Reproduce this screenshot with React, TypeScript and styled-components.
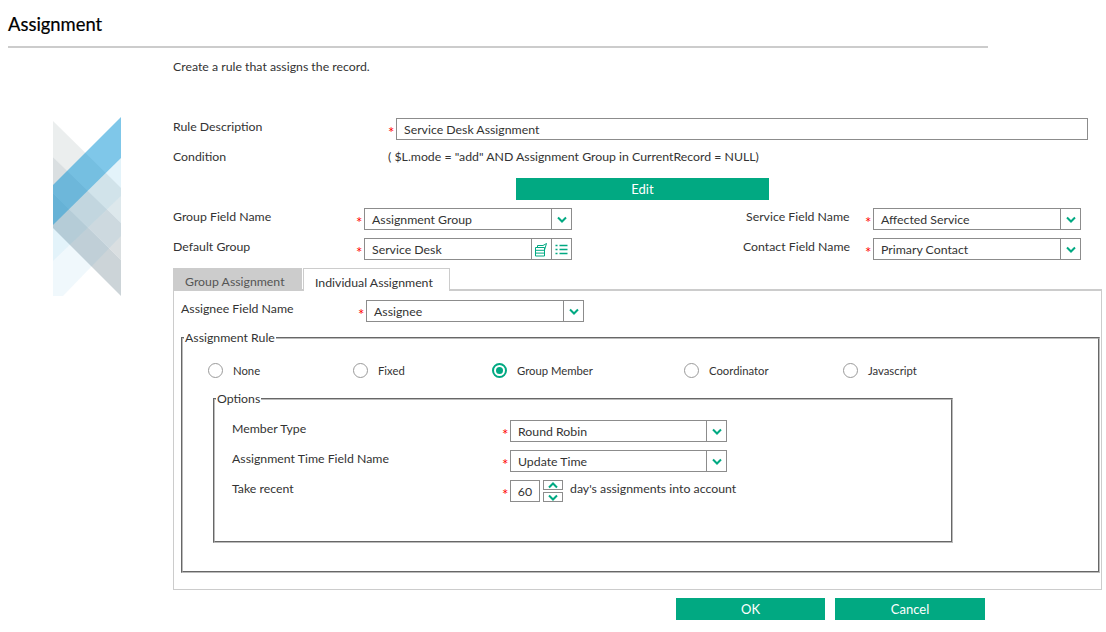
import React from 'react';
import styled, { createGlobalStyle } from 'styled-components';

const GlobalStyle = createGlobalStyle`
  html, body {
    margin: 0;
    padding: 0;
    background: #fff;
  }
  body {
    font-family: 'Lato', 'Open Sans', sans-serif;
    font-size: 12.3px;
    color: #333;
  }
  * {
    box-sizing: border-box;
  }
`;

const Page = styled.div`
  width: 1106px;
  height: 632px;
  overflow: hidden;
`;

const Title = styled.h1`
  margin: 0 118px 0 8px;
  height: 48px;
  padding-top: 12px;
  font-size: 18.4px;
  line-height: 24px;
  font-weight: 400;
  color: #000;
  -webkit-text-stroke: 0.2px #000;
  border-bottom: 2px solid #ccc;
`;

const Intro = styled.p`
  margin: 12px 0 0 173px;
  height: 56px;
  line-height: 14px;
`;

const Main = styled.div`
  display: grid;
  grid-template-columns: 173px 929px;
`;

const LogoCell = styled.div`
  padding-left: 53px;
`;

const Form = styled.div`
  padding-top: 2px;
`;

const Row = styled.div<{ $mt?: number }>`
  display: flex;
  margin-top: ${p => p.$mt ?? 0}px;
  height: 22px;
`;

const Label = styled.div<{ $w: number }>`
  width: ${p => p.$w}px;
  flex-shrink: 0;
  line-height: 18px;
`;

const ConditionLabel = styled(Label)`
  line-height: 22px;
`;

const Star = styled.span`
  width: 8px;
  height: 22px;
  flex-shrink: 0;
  color: #f00;
  font-weight: 400;
  font-size: 15px;
  line-height: 28px;
`;

const Box = styled.div<{ $w?: number }>`
  display: flex;
  height: 22px;
  width: ${p => (p.$w ? `${p.$w}px` : 'auto')};
  flex: ${p => (p.$w ? '0 0 auto' : '1')};
  border: 1px solid #8c8c8c;
  background: #fff;
`;

const DescriptionBox = styled(Box)`
  margin-right: 14px;
`;

const BoxText = styled.div`
  flex: 1;
  padding-left: 7px;
  line-height: 21px;
  white-space: nowrap;
`;

const BoxButton = styled.div`
  width: 20px;
  flex-shrink: 0;
  display: flex;
  align-items: center;
  justify-content: center;
  border-left: 1px solid #8c8c8c;
`;

const ConditionText = styled.div`
  line-height: 22px;
`;

const GreenButton = styled.button<{ $w: number }>`
  width: ${p => p.$w}px;
  height: 22px;
  padding: 0;
  border: none;
  background: #01a982;
  color: #fff;
  font-family: inherit;
  font-size: 13px;
`;

const EditRow = styled.div`
  height: 22px;
  margin: 10px 0 8px 343px;
`;

const Spacer = styled.div<{ $w: number }>`
  width: ${p => p.$w}px;
  flex-shrink: 0;
`;

const Tabs = styled.div`
  display: flex;
  gap: 1px;
  margin-top: 8px;
  height: 21px;
  position: relative;
  z-index: 1;
`;

const Tab = styled.div<{ $active?: boolean; $w: number }>`
  width: ${p => p.$w}px;
  height: ${p => (p.$active ? 23 : 21)}px;
  padding-left: ${p => (p.$active ? 11 : 12)}px;
  line-height: 27px;
  color: ${p => (p.$active ? '#333' : '#555')};
  background: ${p => (p.$active ? '#fff' : '#ccc')};
  border: ${p => (p.$active ? '1px solid #ccc' : 'none')};
  border-bottom: none;
`;

const Panel = styled.div`
  height: 301px;
  padding: 9px 1px 0 7px;
  border: 1px solid #ccc;
  border-top-width: 2px;
`;

const Group = styled.fieldset<{ $h: number; $w?: number; $ml: number; $mt: number }>`
  height: ${p => p.$h}px;
  width: ${p => (p.$w ? `${p.$w}px` : 'auto')};
  margin: ${p => p.$mt}px 0 0 ${p => p.$ml}px;
  padding: 0;
  min-width: 0;
  border: 2px groove #bbb;
`;

const GroupTitle = styled.legend`
  margin-left: 1px;
  padding: 0 1px;
  line-height: 14px;
`;

const Radios = styled.div`
  display: grid;
  grid-template-columns: 145px 139px 192px 159px 1fr;
  margin-top: 17px;
  padding-left: 25px;
`;

const RadioItem = styled.div`
  display: flex;
  align-items: center;
  gap: 10px;
  font-size: 11.3px;
  height: 16px;
`;

const RadioMark = styled.span<{ $on?: boolean }>`
  width: 15px;
  height: 15px;
  border-radius: 50%;
  border: ${p => (p.$on ? '2px solid #01a982' : '1px solid #9a9a9a')};
  display: flex;
  align-items: center;
  justify-content: center;

  &::after {
    content: '';
    display: ${p => (p.$on ? 'block' : 'none')};
    width: 7px;
    height: 7px;
    border-radius: 50%;
    background: #01a982;
  }
`;

const OptionRows = styled.div`
  padding: 14px 0 0 17px;
`;

const NumberBox = styled.div`
  width: 30px;
  height: 22px;
  border: 1px solid #8c8c8c;
  text-align: center;
  line-height: 21px;
`;

const Spinner = styled.div`
  display: flex;
  flex-direction: column;
  justify-content: space-between;
  width: 20px;
  height: 22px;
  margin-left: 3px;
`;

const SpinButton = styled.div`
  height: 10px;
  border: 1px solid #8c8c8c;
  display: flex;
  align-items: center;
  justify-content: center;
`;

const Hint = styled.div`
  margin-left: 7px;
  line-height: 18px;
`;

const Footer = styled.div`
  display: flex;
  gap: 10px;
  margin: 8px 0 0 503px;
`;

const Chevron = ({ up }: { up?: boolean }) => (
  <svg width="10" height="7" viewBox="0 0 10 7" fill="none">
    <path
      d={up ? 'M1 5.5 L5 1.5 L9 5.5' : 'M1 1.5 L5 5.5 L9 1.5'}
      stroke="#01a982"
      strokeWidth="2"
    />
  </svg>
);

const SelectField = ({ w, value }: { w: number; value: string }) => (
  <Box $w={w}>
    <BoxText>{value}</BoxText>
    <BoxButton>
      <Chevron />
    </BoxButton>
  </Box>
);

const Logo = () => (
  <svg width="68" height="180" viewBox="0 0 68 180">
    <polygon points="0,5 68,72 68,107 0,41" fill="#ebeeee" />
    <polygon points="0,41 68,107 68,144 0,77" fill="#dadfe1" />
    <polygon points="0,77 68,144 68,180 0,112" fill="#ccd4d8" />
    <polygon points="68,1 68,42 0,109 0,69" fill="#008fd3" fillOpacity="0.5" />
    <polygon points="68,42 68,80 0,145 0,109" fill="#008fd3" fillOpacity="0.11" />
    <polygon points="68,80 68,120 10,180 0,180 0,145" fill="#008fd3" fillOpacity="0.06" />
  </svg>
);

const CopyIcon = () => (
  <svg width="15" height="15" viewBox="0 0 15 15" fill="none" stroke="#01a982" strokeWidth="1">
    <path d="M1.5 5.5H10.5V14H1.5Z M1.5 8.3H10.5 M1.5 11.1H10.5 M3.5 5.5V3.5H9 L12.5 1.5 L10.5 8" />
  </svg>
);

const ListIcon = () => (
  <svg width="13" height="11" viewBox="0 0 13 11" fill="none" stroke="#01a982" strokeWidth="1.6">
    <path d="M0.5 1.5H2.5 M4.5 1.5H12.5 M0.5 5.5H2.5 M4.5 5.5H12.5 M0.5 9.5H2.5 M4.5 9.5H12.5" />
  </svg>
);

const radioOptions = ['None', 'Fixed', 'Group Member', 'Coordinator', 'Javascript'];

function App() {
  return (
    <Page>
      <GlobalStyle />
      <Title>Assignment</Title>
      <Intro>Create a rule that assigns the record.</Intro>
      <Main>
        <LogoCell>
          <Logo />
        </LogoCell>
        <Form>
          <Row>
            <Label $w={215}>Rule Description</Label>
            <Star>*</Star>
            <DescriptionBox>
              <BoxText>Service Desk Assignment</BoxText>
            </DescriptionBox>
          </Row>
          <Row $mt={6}>
            <ConditionLabel $w={215}>Condition</ConditionLabel>
            <ConditionText>( $L.mode = "add" AND Assignment Group in CurrentRecord = NULL)</ConditionText>
          </Row>
          <EditRow>
            <GreenButton $w={253}>Edit</GreenButton>
          </EditRow>
          <Row>
            <Label $w={183}>Group Field Name</Label>
            <Star>*</Star>
            <SelectField w={208} value="Assignment Group" />
            <Spacer $w={174} />
            <Label $w={119}>Service Field Name</Label>
            <Star>*</Star>
            <SelectField w={208} value="Affected Service" />
          </Row>
          <Row $mt={8}>
            <Label $w={183}>Default Group</Label>
            <Star>*</Star>
            <Box $w={208}>
              <BoxText>Service Desk</BoxText>
              <BoxButton>
                <CopyIcon />
              </BoxButton>
              <BoxButton>
                <ListIcon />
              </BoxButton>
            </Box>
            <Spacer $w={171} />
            <Label $w={122}>Contact Field Name</Label>
            <Star>*</Star>
            <SelectField w={208} value="Primary Contact" />
          </Row>
          <Tabs>
            <Tab $w={129}>Group Assignment</Tab>
            <Tab $w={147} $active>Individual Assignment</Tab>
          </Tabs>
          <Panel>
            <Row>
              <Label $w={177}>Assignee Field Name</Label>
              <Star>*</Star>
              <SelectField w={218} value="Assignee" />
            </Row>
            <Group $h={242} $ml={0} $mt={9}>
              <GroupTitle>Assignment Rule</GroupTitle>
              <Radios>
                {radioOptions.map(option => (
                  <RadioItem key={option}>
                    <RadioMark $on={option === 'Group Member'} />
                    {option}
                  </RadioItem>
                ))}
              </Radios>
              <Group $h={151} $w={740} $ml={30} $mt={14}>
                <GroupTitle>Options</GroupTitle>
                <OptionRows>
                  <Row>
                    <Label $w={270}>Member Type</Label>
                    <Star>*</Star>
                    <SelectField w={217} value="Round Robin" />
                  </Row>
                  <Row $mt={8}>
                    <Label $w={270}>Assignment Time Field Name</Label>
                    <Star>*</Star>
                    <SelectField w={217} value="Update Time" />
                  </Row>
                  <Row $mt={8}>
                    <Label $w={270}>Take recent</Label>
                    <Star>*</Star>
                    <NumberBox>60</NumberBox>
                    <Spinner>
                      <SpinButton>
                        <Chevron up />
                      </SpinButton>
                      <SpinButton>
                        <Chevron />
                      </SpinButton>
                    </Spinner>
                    <Hint>day's assignments into account</Hint>
                  </Row>
                </OptionRows>
              </Group>
            </Group>
          </Panel>
          <Footer>
            <GreenButton $w={149}>OK</GreenButton>
            <GreenButton $w={150}>Cancel</GreenButton>
          </Footer>
        </Form>
      </Main>
    </Page>
  );
}

export default App;
